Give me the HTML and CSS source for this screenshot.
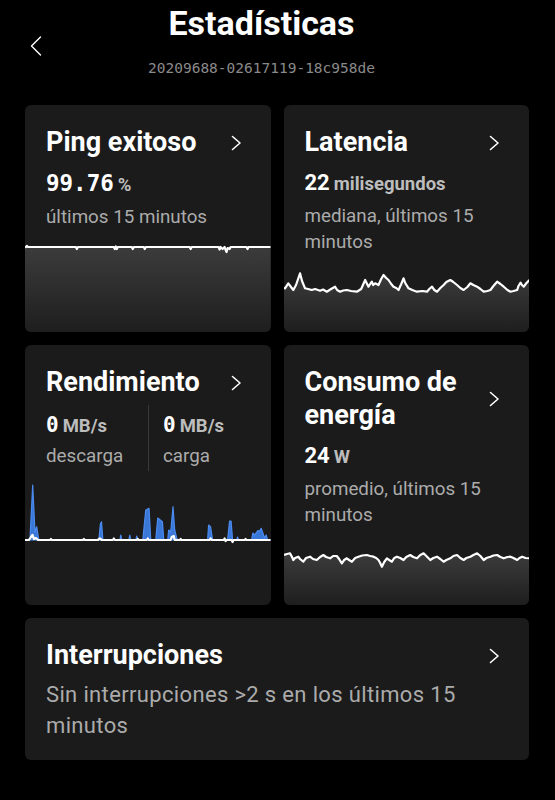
FILE: index.html
```html
<!DOCTYPE html>
<html lang="es">
<head>
<meta charset="utf-8">
<title>Estadísticas</title>
<link rel="stylesheet" href="styles.css">
</head>
<body>
<header class="top">
  <button class="back" aria-label="Atrás">
    <svg width="12" height="20" viewBox="0 0 12 20"><path d="M10.5 1 L1.5 10 L10.5 19" fill="none" stroke="#fff" stroke-width="1.4" stroke-linecap="round" stroke-linejoin="round"/></svg>
  </button>
  <h1 class="title">Estadísticas</h1>
  <div class="device-id">20209688-02617119-18c958de</div>
</header>

<main class="grid">
  <section class="card card-ping">
    <div class="head">
      <h2 class="card-title">Ping exitoso</h2>
      <svg class="chev" width="11" height="16" viewBox="0 0 11 16"><path d="M1.5 1.5 L9 8 L1.5 14.5" fill="none" stroke="#fff" stroke-width="1.6" stroke-linecap="round" stroke-linejoin="round"/></svg>
    </div>
    <div class="value"><span class="num mono">99.76</span> <span class="unit">%</span></div>
    <p class="sub">últimos 15 minutos</p>
    <svg class="chart chart-ping" viewBox="0 0 246 90" preserveAspectRatio="none">
      <defs>
        <linearGradient id="g1" x1="0" y1="0" x2="0" y2="1">
          <stop offset="0" stop-color="#3c3c3c"/>
          <stop offset="1" stop-color="#1e1e1e"/>
        </linearGradient>
      </defs>
      <path d="M0,5.5 L2,4 L3,5 L51,5 L52,7 L53,5 L89,5 L90,7 L91,4.5 L92,7 L93,5 L107,5 L108,7 L109,5 L119,5 L120,7 L121,5 L165,5 L166,7 L167,5 L194,5 L195,7.5 L196,5 L198,7 L200,5 L201,8 L202,10 L203,6 L205,7 L206,5 L222,5 L223,7 L224,5 L246,5 L246,90 L0,90 Z" fill="url(#g1)"/>
      <path d="M0,5.5 L2,4 L3,5 L51,5 L52,7 L53,5 L89,5 L90,7 L91,4.5 L92,7 L93,5 L107,5 L108,7 L109,5 L119,5 L120,7 L121,5 L165,5 L166,7 L167,5 L194,5 L195,7.5 L196,5 L198,7 L200,5 L201,8 L202,10 L203,6 L205,7 L206,5 L222,5 L223,7 L224,5 L246,5" fill="none" stroke="#fff" stroke-width="2.2" stroke-linejoin="round"/>
    </svg>
  </section>

  <section class="card card-lat">
    <div class="head">
      <h2 class="card-title">Latencia</h2>
      <svg class="chev" width="11" height="16" viewBox="0 0 11 16"><path d="M1.5 1.5 L9 8 L1.5 14.5" fill="none" stroke="#fff" stroke-width="1.6" stroke-linecap="round" stroke-linejoin="round"/></svg>
    </div>
    <div class="value"><span class="num">22</span> <span class="unit">milisegundos</span></div>
    <p class="sub">mediana, últimos 15 minutos</p>
    <svg class="chart chart-lat" viewBox="0 0 245 62" preserveAspectRatio="none">
      <defs>
        <linearGradient id="g2" x1="0" y1="0" x2="0" y2="1">
          <stop offset="0" stop-color="#3c3c3c"/>
          <stop offset="1" stop-color="#1e1e1e"/>
        </linearGradient>
      </defs>
      <path d="M0,18 L1,18.3 L4.3,13.3 L7,17 L9.3,20 L12,15 L16,3.3 L18,11 L21,18.3 L24,19 L27.7,20 L31,19 L36,20.7 L39,19.5 L42.7,21.7 L47,19 L51,16.7 L53,20 L56,21.7 L59,20.5 L62.7,20 L67,21 L72.7,21.7 L77,19 L81,10 L84.3,16.7 L86,14 L87.7,11.7 L89,15 L91,13.3 L94.3,15 L97,9 L99.3,5 L102,8 L104.3,10 L107,14 L109.3,16.7 L112,18 L114.3,20 L117,14 L119.3,8.3 L121,13 L124.3,18.3 L128,20 L132.7,21.7 L138,21 L142.7,21.7 L145,19 L147.7,16.7 L150,20 L152.7,21.7 L156,18 L159.3,15 L162,12 L166,10 L169,12 L172.7,15 L176,18 L179.3,20 L183,17 L186,13.3 L189,15 L192.7,16.7 L196,19 L199.3,21.7 L203,21 L206,20 L209,16 L212.7,11.7 L216,14 L219.3,16.7 L223,20 L226,21.7 L229,21 L232.7,20 L234,16 L236,12.7 L237.5,15 L239.3,16.7 L242,13 L245,10 L245,62 L0,62 Z" fill="url(#g2)"/>
      <path d="M0,18 L1,18.3 L4.3,13.3 L7,17 L9.3,20 L12,15 L16,3.3 L18,11 L21,18.3 L24,19 L27.7,20 L31,19 L36,20.7 L39,19.5 L42.7,21.7 L47,19 L51,16.7 L53,20 L56,21.7 L59,20.5 L62.7,20 L67,21 L72.7,21.7 L77,19 L81,10 L84.3,16.7 L86,14 L87.7,11.7 L89,15 L91,13.3 L94.3,15 L97,9 L99.3,5 L102,8 L104.3,10 L107,14 L109.3,16.7 L112,18 L114.3,20 L117,14 L119.3,8.3 L121,13 L124.3,18.3 L128,20 L132.7,21.7 L138,21 L142.7,21.7 L145,19 L147.7,16.7 L150,20 L152.7,21.7 L156,18 L159.3,15 L162,12 L166,10 L169,12 L172.7,15 L176,18 L179.3,20 L183,17 L186,13.3 L189,15 L192.7,16.7 L196,19 L199.3,21.7 L203,21 L206,20 L209,16 L212.7,11.7 L216,14 L219.3,16.7 L223,20 L226,21.7 L229,21 L232.7,20 L234,16 L236,12.7 L237.5,15 L239.3,16.7 L242,13 L245,10" fill="none" stroke="#fff" stroke-width="2.2" stroke-linejoin="round"/>
    </svg>
  </section>

  <section class="card card-rend">
    <div class="head">
      <h2 class="card-title">Rendimiento</h2>
      <svg class="chev" width="11" height="16" viewBox="0 0 11 16"><path d="M1.5 1.5 L9 8 L1.5 14.5" fill="none" stroke="#fff" stroke-width="1.6" stroke-linecap="round" stroke-linejoin="round"/></svg>
    </div>
    <div class="stats">
      <div class="stat">
        <div class="value"><span class="num mono small">0</span> <span class="unit">MB/s</span></div>
        <p class="sub">descarga</p>
      </div>
      <div class="stat stat-right">
        <div class="value"><span class="num mono small">0</span> <span class="unit">MB/s</span></div>
        <p class="sub">carga</p>
      </div>
    </div>
    <svg class="chart chart-rend" viewBox="0 0 246 125" preserveAspectRatio="none">
      <path d="M0,60 L5,59 L7.7,5 L10,52 L11.7,46.7 L13.5,58 L14,60 L74,60 L75.5,44 L76.7,41.7 L78,60 L95,60 L96,55 L97,60 L104,60 L105,55 L106,60 L111,60 L112,56 L113,60 L118,60 L121,30 L124.3,28.3 L126,60 L131,60 L133,38 L134.3,39 L137.7,41.7 L139,60 L143,60 L144,50 L146,52 L148.3,26.7 L150,50 L152,58 L153,60 L183,60 L184,45 L186,47 L188,60 L203,60 L205,41 L206.5,41 L208,60 L212,60 L213,57 L214,60 L227,60 L228.3,53 L230,55 L233.3,50.7 L235,51 L236.7,48.3 L238,52 L240,58 L241.7,55 L243,60 L246,60 Z" fill="#3a78d8" stroke="#4b8bf0" stroke-width="1.2" stroke-linejoin="round"/>
      <path d="M0,60 L4,60 L6,57 L7.5,55 L9,59 L11,58 L13,60 L25,60 L26,59 L27,60 L58,60 L59,59 L60,60 L73,60 L75,58.5 L77,60 L88,60 L89,58.5 L90,60 L112,60 L113,59 L114,60 L122,60 L123,58.5 L124,60 L146,60 L147,57 L149,56 L150,60 L155,60 L156,59 L157,60 L185,60 L186,58.5 L187,60 L199,60 L200,58.5 L201,61 L202,60 L207,60 L208,62 L209,60 L220,60 L221,59 L222,60 L246,60" fill="none" stroke="#fff" stroke-width="2.2" stroke-linejoin="round"/>
    </svg>
  </section>

  <section class="card card-energy">
    <div class="head">
      <h2 class="card-title">Consumo de<br>energía</h2>
      <svg class="chev" width="11" height="16" viewBox="0 0 11 16"><path d="M1.5 1.5 L9 8 L1.5 14.5" fill="none" stroke="#fff" stroke-width="1.6" stroke-linecap="round" stroke-linejoin="round"/></svg>
    </div>
    <div class="value"><span class="num">24</span> <span class="unit">W</span></div>
    <p class="sub">promedio, últimos 15 minutos</p>
    <svg class="chart chart-energy" viewBox="0 0 245 60" preserveAspectRatio="none">
      <defs>
        <linearGradient id="g3" x1="0" y1="0" x2="0" y2="1">
          <stop offset="0" stop-color="#3c3c3c"/>
          <stop offset="1" stop-color="#1e1e1e"/>
        </linearGradient>
      </defs>
      <path d="M0,10 L3,9 L6,8.3 L8,12 L9.3,15 L11,13 L14.3,11.7 L16,14 L19.3,16.7 L22,13 L26,11.7 L29,14 L32.7,15 L36,12 L39.3,10 L42,12 L46,13.3 L49,11 L52.7,11 L55,14 L57.7,18.3 L60,15 L62.7,13.3 L65,15 L67.7,16.7 L71,13 L74.3,11.7 L78,10.5 L82.7,10 L86,11 L89.3,11.7 L92,13 L94.3,15 L96,18 L97.7,21.7 L100,17 L102.7,13.3 L105,15 L107.7,16.7 L110,13 L112.7,11.7 L116,13 L119.3,15 L122,12 L126,10 L129,12 L132.7,13.3 L136,10 L139.3,8.3 L142,11 L146,15 L149,13 L152.7,11.7 L156,14 L159.3,16.7 L162,15 L166,13.3 L169,11 L172.7,10 L176,13 L179.3,15 L182,13 L186,11.7 L189,10 L192.7,8.3 L196,11 L199.3,15 L202,13 L206,11.7 L209,10.5 L212.7,10 L216,12 L219.3,13.3 L223,12 L226,11.7 L229,13 L232.7,15 L235,13 L237.7,11.7 L241,13 L245,13.3 L245,60 L0,60 Z" fill="url(#g3)"/>
      <path d="M0,10 L3,9 L6,8.3 L8,12 L9.3,15 L11,13 L14.3,11.7 L16,14 L19.3,16.7 L22,13 L26,11.7 L29,14 L32.7,15 L36,12 L39.3,10 L42,12 L46,13.3 L49,11 L52.7,11 L55,14 L57.7,18.3 L60,15 L62.7,13.3 L65,15 L67.7,16.7 L71,13 L74.3,11.7 L78,10.5 L82.7,10 L86,11 L89.3,11.7 L92,13 L94.3,15 L96,18 L97.7,21.7 L100,17 L102.7,13.3 L105,15 L107.7,16.7 L110,13 L112.7,11.7 L116,13 L119.3,15 L122,12 L126,10 L129,12 L132.7,13.3 L136,10 L139.3,8.3 L142,11 L146,15 L149,13 L152.7,11.7 L156,14 L159.3,16.7 L162,15 L166,13.3 L169,11 L172.7,10 L176,13 L179.3,15 L182,13 L186,11.7 L189,10 L192.7,8.3 L196,11 L199.3,15 L202,13 L206,11.7 L209,10.5 L212.7,10 L216,12 L219.3,13.3 L223,12 L226,11.7 L229,13 L232.7,15 L235,13 L237.7,11.7 L241,13 L245,13.3" fill="none" stroke="#fff" stroke-width="2.2" stroke-linejoin="round"/>
    </svg>
  </section>

  <section class="card card-wide">
    <div class="head">
      <h2 class="card-title">Interrupciones</h2>
      <svg class="chev" width="11" height="16" viewBox="0 0 11 16"><path d="M1.5 1.5 L9 8 L1.5 14.5" fill="none" stroke="#fff" stroke-width="1.6" stroke-linecap="round" stroke-linejoin="round"/></svg>
    </div>
    <p class="sub sub-wide">Sin interrupciones &gt;2 s en los últimos 15 minutos</p>
  </section>
</main>
</body>
</html>
```
FILE: styles.css
```css
* { box-sizing: border-box; }

html, body {
  margin: 0;
  padding: 0;
  background: #000;
}

body {
  width: 555px;
  color: #fff;
  font-family: Roboto, "Noto Sans", "Liberation Sans", sans-serif;
}

.top {
  display: grid;
  grid-template-columns: 1fr auto 1fr;
  grid-template-rows: auto auto;
  padding: 3px 32px 0 0;
}

.back {
  grid-column: 1;
  grid-row: 1 / span 2;
  align-self: start;
  justify-self: start;
  margin: 33px 0 0 30px;
  padding: 0;
  border: 0;
  background: none;
  width: 12px;
  height: 20px;
  display: block;
}
.back svg { display: block; }

.title {
  grid-column: 2;
  grid-row: 1;
  margin: 0;
  font-size: 34px;
  line-height: 40px;
  font-weight: 700;
  text-align: center;
}

.device-id {
  grid-column: 2;
  grid-row: 2;
  margin-top: 15px;
  font-family: "DejaVu Sans Mono", "Liberation Mono", monospace;
  font-size: 14.5px;
  line-height: 20px;
  color: #8a8a8a;
  text-align: center;
}

.grid {
  display: grid;
  grid-template-columns: 1fr 1fr;
  grid-template-rows: 227px 260px auto;
  gap: 13px;
  margin: 27px 26px 40px 25px;
}

.card {
  background: #1b1b1b;
  border-radius: 6px;
  overflow: hidden;
  display: flex;
  flex-direction: column;
  padding-top: 21px;
}

.head {
  display: flex;
  align-items: center;
  justify-content: space-between;
  padding: 0 29px 0 21px;
}

.card-title {
  margin: 0;
  font-size: 27px;
  line-height: 33px;
  font-weight: 700;
}

.chev { display: block; flex: none; }

.value {
  margin-top: 10px;
  padding-left: 21px;
  line-height: 28px;
  white-space: nowrap;
}

.num {
  font-size: 22px;
  font-weight: 700;
  color: #fff;
}

.num.mono {
  font-family: "DejaVu Sans Mono", "Liberation Mono", monospace;
  font-size: 22.5px;
}

.num.mono.small { font-size: 21px; }

.unit {
  font-size: 18.5px;
  font-weight: 700;
  color: #bdbdbd;
}

.sub {
  margin: 4px 0 0;
  padding: 0 20px 0 21px;
  font-size: 18.8px;
  line-height: 26px;
  color: #ababab;
}

.chart {
  display: block;
  width: 100%;
  margin-top: auto;
}
.chart-ping { height: 90px; }
.chart-lat { height: 62px; }
.chart-rend { height: 125px; }
.chart-energy { height: 60px; }

.stats {
  display: flex;
  margin: 6px 0 0 21px;
}

.stat { padding-top: 5.5px; width: 102px; }
.stat .value { margin-top: 0; padding-left: 0; }
.stat .sub { margin-top: 2px; padding: 0; }
.stat-right {
  width: auto;
  border-left: 1px solid #3a3a3a;
  padding-left: 14px;
  padding-bottom: 2px;
}

.card-wide {
  grid-column: 1 / span 2;
  padding-top: 21px;
  padding-bottom: 19px;
}

.sub-wide {
  margin-top: 7px;
  padding-right: 29px;
  font-size: 22px;
  line-height: 31px;
  letter-spacing: 0.35px;
}
```
